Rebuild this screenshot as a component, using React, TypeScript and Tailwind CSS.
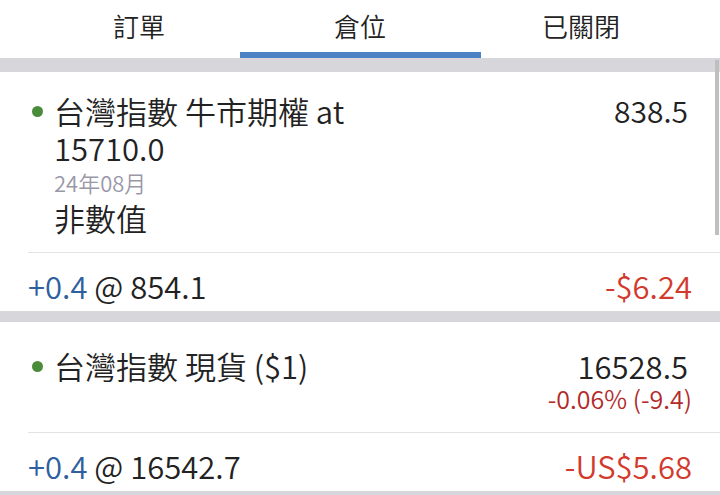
const font = { fontFamily: '"Noto Sans CJK TC", "Noto Sans", sans-serif' };

const tabs = [
	{ label: '訂單', active: false, cls: 'pl-[38px]' },
	{ label: '倉位', active: true, cls: '' },
	{ label: '已關閉', active: false, cls: 'pr-[38px]' },
];

function Dot() {
	return <span className="mt-[14px] mr-[11px] h-[11px] w-[11px] shrink-0 rounded-full bg-[#4a8c3a]" />;
}

function TradeRow({ qty, price, pnl }: { qty: string; price: string; pnl: string }) {
	return (
		<div className="flex h-[58px] items-center justify-between pl-[28px] pr-[28px] pt-[6px] text-[31px] leading-none">
			<div>
				<span className="text-[#2f5f9e]">{qty}</span>
				<span className="text-[#222]"> @ {price}</span>
			</div>
			<span className="text-[#d23a2e]">{pnl}</span>
		</div>
	);
}

export default function App() {
	return (
		<div className="relative h-[495px] w-[720px] overflow-hidden bg-white font-[350] text-[#222]" style={font}>
			{/* tabs */}
			<div className="flex h-[58px]">
				{tabs.map((t) => (
					<div
						key={t.label}
						className={`relative flex w-[240px] items-center justify-center pb-[7px] text-[26px] ${t.cls}`}
					>
						{t.label}
						{t.active && <div className="absolute bottom-0 left-0 h-[6px] w-[241px] bg-[#4a82c4]" />}
					</div>
				))}
			</div>
			<div className="h-[14px] bg-[#d7d7db]" />

			{/* card 1 */}
			<div className="bg-white">
				<div className="flex justify-between pl-[32px] pr-[32px] pt-[20px] pb-[16px]">
					<div className="flex items-start">
						<Dot />
						<div>
							<div className="text-[31px] leading-[37px]">
								台灣指數 牛市期權 at
								<br />
								15710.0
							</div>
							<div className="text-[22px] leading-[33px] text-[#9a98a8]">24年08月</div>
							<div className="text-[31px] leading-[37px]">非數值</div>
						</div>
					</div>
					<div className="text-[30px] leading-[37px]">838.5</div>
				</div>
				<div className="ml-[28px] h-px bg-[#e3e3e6]" />
				<TradeRow qty="+0.4" price="854.1" pnl="-$6.24" />
			</div>
			<div className="h-[11px] bg-[#d7d7db]" />

			{/* card 2 */}
			<div className="bg-white">
				<div className="flex justify-between pl-[32px] pr-[28px] pt-[25px] pb-[19px]">
					<div className="flex items-start">
						<Dot />
						<div className="text-[31px] leading-[37px]">台灣指數 現貨 ($1)</div>
					</div>
					<div className="flex flex-col items-end">
						<div className="pr-[4px] text-[31px] leading-[37px]">16528.5</div>
						<div className="text-[25px] leading-[29px] text-[#b22a2a]">-0.06% (-9.4)</div>
					</div>
				</div>
				<div className="ml-[28px] h-px bg-[#e3e3e6]" />
				<TradeRow qty="+0.4" price="16542.7" pnl="-US$5.68" />
			</div>
			<div className="h-[11px] bg-[#d7d7db]" />

			{/* scrollbar */}
			<div className="absolute right-[1px] top-[60px] h-[175px] w-[4px] bg-[#bfbfbf]" />
		</div>
	);
}
